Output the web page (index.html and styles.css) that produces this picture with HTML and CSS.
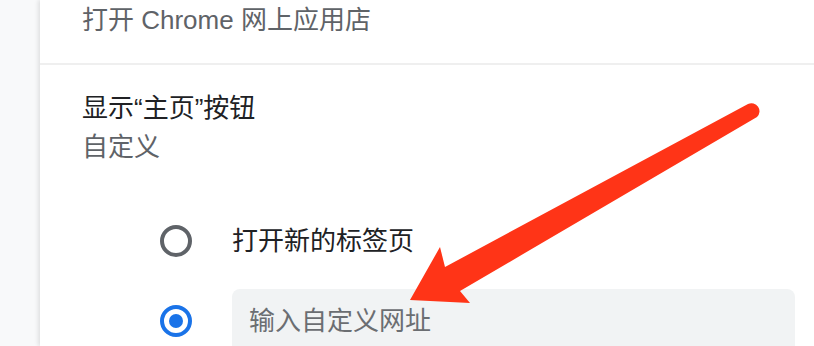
FILE: index.html
```html
<!DOCTYPE html>
<html lang="zh-CN">
<head>
<meta charset="utf-8">
<title>设置</title>
<link rel="stylesheet" href="styles.css">
</head>
<body>
<div class="card">
  <div class="row-link">打开 Chrome 网上应用店</div>
  <div class="setting">
    <div class="title">显示“主页”按钮</div>
    <div class="sub">自定义</div>
  </div>
  <div class="options">
    <label class="option">
      <span class="radio"></span>
      <span class="label">打开新的标签页</span>
    </label>
    <label class="option">
      <span class="radio checked"></span>
      <input class="url" type="text" placeholder="输入自定义网址">
    </label>
  </div>
</div>
<svg class="arrow" width="814" height="346" viewBox="0 0 814 346">
  <path d="M410,300 L440,247 L445,267 L748,104 A8,8 0 0 1 757,117 L460,291 L470,303 Z" fill="#ff3417"/>
</svg>
</body>
</html>
```
FILE: styles.css
```css
html, body {
  margin: 0;
  padding: 0;
  height: 100%;
  overflow: hidden;
}
body {
  background: #f8f9fa;
  font-family: "Liberation Sans", "Noto Sans CJK SC", sans-serif;
  font-size: 26px;
}
.card {
  margin-left: 40px;
  height: 346px;
  background: #ffffff;
  box-shadow: -2px 0 4px rgba(0, 0, 0, 0.10);
}
.row-link {
  padding: 2px 0 25px 42px;
  line-height: 36px;
  color: #5f6368;
  border-bottom: 2px solid #efefef;
}
.setting {
  padding: 24px 0 0 42px;
  line-height: 39px;
}
.title {
  color: #202124;
}
.sub {
  color: #5f6368;
}
.options {
  margin-top: 44px;
  padding-left: 120px;
  display: flex;
  flex-direction: column;
  gap: 18px;
}
.option {
  display: flex;
  align-items: center;
  gap: 40px;
  height: 60px;
}
.option:last-child {
  height: 64px;
}
.radio {
  box-sizing: border-box;
  width: 32px;
  height: 32px;
  border: 4px solid #5f6368;
  border-radius: 50%;
  display: flex;
  align-items: center;
  justify-content: center;
  flex: none;
}
.radio.checked {
  border-color: #1a73e8;
}
.radio.checked::after {
  content: "";
  width: 14px;
  height: 14px;
  border-radius: 50%;
  background: #1a73e8;
}
.label {
  line-height: 36px;
  color: #202124;
}
.url {
  box-sizing: border-box;
  width: 563px;
  height: 64px;
  margin: 0;
  border: none;
  border-radius: 8px;
  background: #f1f3f4;
  padding: 0 17px;
  font: inherit;
  color: #202124;
  outline: none;
}
.url::placeholder {
  color: #6b6e72;
}
.arrow {
  position: absolute;
  left: 0;
  top: 0;
  pointer-events: none;
}
```
